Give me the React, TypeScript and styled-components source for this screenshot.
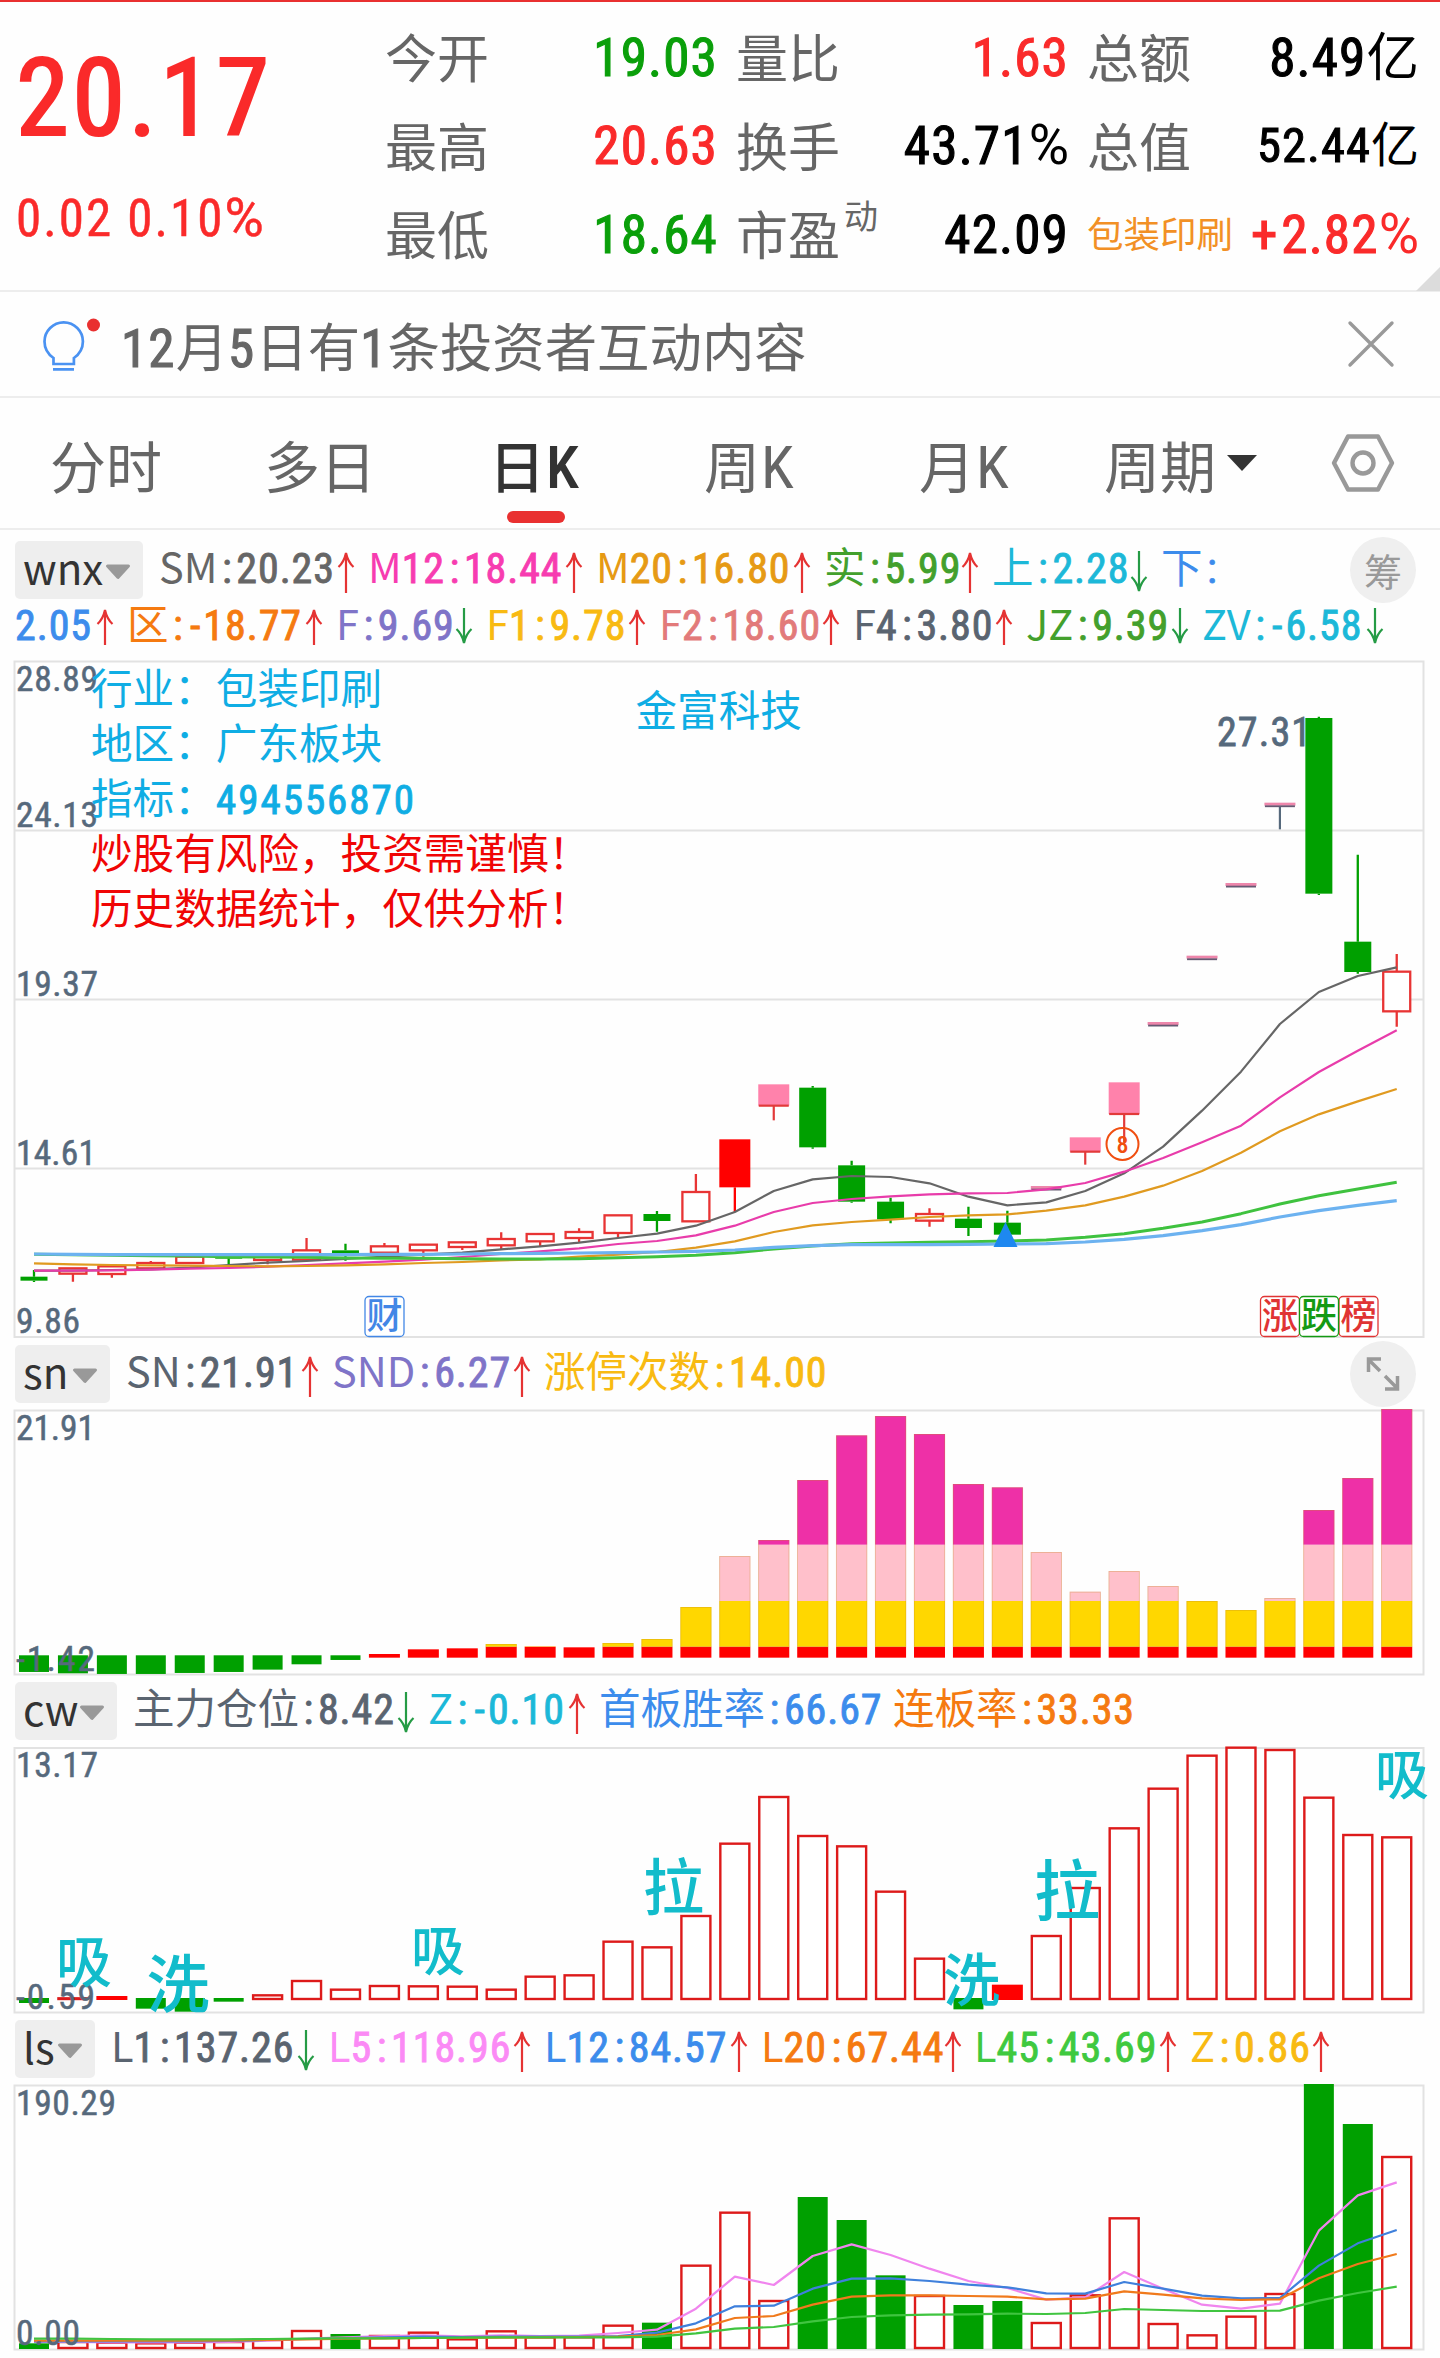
import React from "react";
import styled, { createGlobalStyle } from "styled-components";

const CJK = `"Noto Sans CJK SC", "Noto Sans", sans-serif`;
const DIGITS = `"Roboto Condensed", Roboto, "Noto Sans CJK SC", sans-serif`;

const RED = "#fa2a2a";
const GREEN = "#0a9f0a";
const AXIS = "#56697c";
const GRID = "#e2e2e2";

const GlobalStyle = createGlobalStyle`
  * { box-sizing: border-box; }
  body { margin: 0; background: #fff; }
`;

const Page = styled.main`
  width: 1440px;
  height: 2358px;
  overflow: hidden;
  display: flex;
  flex-direction: column;
  border-top: 2px solid #e93030;
  background: #fefefe;
  font-family: ${CJK};
  color: #666;
`;

/* ---------- mixed latin / CJK text with condensed numerals ---------- */

const Num = styled.span`
  font-family: ${DIGITS};
  font-weight: 400;
  font-size: 1.012em;
  letter-spacing: 0.022em;
  line-height: 1;
  -webkit-text-stroke: 0.021em currentColor;
`;

const Colon = styled(Num)`
  display: inline-block;
  width: 0.45em;
  letter-spacing: 0;
  text-align: center;
`;

const Sign = styled(Num)`
  display: inline-block;
  margin: 0 0.05em 0 0.06em;
`;

const Percent = styled.span`
  font-family: Roboto, sans-serif;
  font-size: 1.05em;
  font-weight: 400;
  line-height: 1;
`;

function Mixed({ children }: { children: string }) {
  return (
    <>
      {children.split(/([\d.]+|[:%+-])/).map((part, i) => {
        if (part === ":") return <Colon key={i}>:</Colon>;
        if (part === "%") return <Percent key={i}>%</Percent>;
        if (part === "-" || part === "+") return <Sign key={i}>{part}</Sign>;
        return i % 2 ? <Num key={i}>{part}</Num> : part;
      })}
    </>
  );
}

/* ---------- quote header ---------- */

const Quote = styled.header`
  position: relative;
  height: 290px;
  flex: none;
  display: grid;
  grid-template-columns: 367px 333px 333px 332px;
  column-gap: 18px;
  padding-right: 21px;
  border-bottom: 2px solid #ededed;
`;

const PriceBlock = styled.div`
  color: ${RED};
  padding: 34px 0 0 16px;
  white-space: nowrap;
`;

const Price = styled.div`
  font: 400 107px/126px ${DIGITS};
  letter-spacing: 3.4px;
  -webkit-text-stroke: 2.2px currentColor;
`;

const Change = styled.div`
  margin: 27px 0 0 0;
  font: 400 51px/60px ${DIGITS};
  letter-spacing: 2.1px;
  -webkit-text-stroke: 0.5px currentColor;
`;

const StatColumn = styled.div`
  padding-top: 10px;
`;

const Stat = styled.div`
  display: flex;
  justify-content: space-between;
  align-items: center;
  height: 88.5px;
  white-space: nowrap;
`;

const StatLabel = styled.span<{ $sector?: boolean }>`
  font-size: ${(p) => (p.$sector ? 36.5 : 52)}px;
  line-height: 80px;
  color: ${(p) => (p.$sector ? "#f29025" : "#666")};
`;

const Sup = styled.sup`
  font-size: 34px;
  line-height: 0;
  vertical-align: 26px;
  margin-left: 4px;
`;

const StatValue = styled.span<{ $color?: string; $small?: boolean }>`
  font-size: ${(p) => (p.$small ? 48 : 52.5)}px;
  line-height: 80px;
  padding-bottom: 7px;
  color: ${(p) => p.$color ?? "#000"};
`;

const Corner = styled.i`
  position: absolute;
  right: 0;
  bottom: -1px;
  border-bottom: 24px solid #dcdcdc;
  border-left: 24px solid transparent;
`;

/* ---------- notice ---------- */

const Notice = styled.section`
  height: 106px;
  flex: none;
  display: flex;
  align-items: center;
  padding: 0 45px 0 40px;
  border-bottom: 2px solid #ededed;
`;

const NoticeText = styled.p`
  flex: 1;
  margin: 0 0 0 19px;
  font-size: 52.4px;
  line-height: 80px;
`;

/* ---------- tabs ---------- */

const Tabs = styled.nav`
  height: 132px;
  flex: none;
  display: flex;
  border-bottom: 2px solid #ededed;
  padding-left: 50px;
`;

const Tab = styled.div<{ $w: number; $active?: boolean }>`
  position: relative;
  width: ${(p) => p.$w}px;
  font-size: 56px;
  line-height: 132px;
  white-space: nowrap;
  color: ${(p) => (p.$active ? "#333" : "#666")};
  font-weight: ${(p) => (p.$active ? 500 : 400)};
  ${(p) =>
    p.$active &&
    `&::after { content: ""; position: absolute; left: 18px; top: 113px; width: 58px; height: 12px; border-radius: 6px; background: #e93030; }`}
`;

const TabLetter = styled.span<{ $active?: boolean }>`
  font-family: ${DIGITS};
  font-weight: ${(p) => (p.$active ? 500 : 400)};
  font-size: 60px;
  line-height: 1;
  margin-left: 1px;
`;

const Caret = styled.i`
  display: inline-block;
  margin-left: 11px;
  vertical-align: 17px;
  border-top: 16px solid #333;
  border-left: 15px solid transparent;
  border-right: 15px solid transparent;
`;

const SettingsButton = styled.div`
  padding-top: 35px;
`;

/* ---------- indicator rows ---------- */

const IndicatorHead = styled.section<{ $h: number; $top: number }>`
  height: ${(p) => p.$h}px;
  flex: none;
  padding: ${(p) => p.$top}px 0 0 15px;
  display: flex;
  flex-direction: column;
`;

const IndicatorRow = styled.div<{ $h: number }>`
  display: flex;
  align-items: center;
  height: ${(p) => p.$h}px;
`;

const Chip = styled.div<{ $w: number }>`
  width: ${(p) => p.$w}px;
  height: 58px;
  flex: none;
  display: flex;
  align-items: center;
  justify-content: space-between;
  padding: 0 12px 0 8px;
  border-radius: 5px;
  background: #eee;
  color: #333;
  font-size: 42px;
  line-height: 56px;
  span {
    padding-bottom: 6px;
  }
  svg {
    margin-top: 3px;
  }
`;

const Reading = styled.div<{ $w: number; $color: string; $lift: number }>`
  width: ${(p) => p.$w}px;
  flex: none;
  display: flex;
  align-items: center;
  font-size: 41.5px;
  line-height: 56px;
  white-space: nowrap;
  color: ${(p) => p.$color};
  svg {
    flex: none;
    margin: 3px 13px 0 auto;
  }
  > span {
    padding-bottom: ${(p) => p.$lift}px;
  }
`;

const Spacer = styled.div<{ $w: number }>`
  width: ${(p) => p.$w}px;
  flex: none;
`;

const RoundButton = styled.div`
  width: 66px;
  height: 66px;
  margin: 0 24px 0 auto;
  flex: none;
  border-radius: 50%;
  display: flex;
  align-items: center;
  justify-content: center;
  background: #efefef;
  color: #999;
  font-size: 38px;
  line-height: 60px;
`;

const Plot = styled.svg`
  display: block;
  flex: none;
  overflow: visible;
`;

function ChipMark() {
  return (
    <svg width="26" height="16" viewBox="0 0 26 16">
      <path d="M2.5 2h21L13 13.5z" fill="#999" stroke="#999" strokeWidth="3" strokeLinejoin="round" />
    </svg>
  );
}

function Trend({ up, short }: { up: boolean; short?: boolean }) {
  const h = short ? 37 : 42;
  return (
    <svg width="18" height={h} viewBox={`0 0 18 ${h}`} fill="none" stroke={up ? "#e53333" : "#259b45"} strokeWidth="2.2">
      <path
        transform={up ? undefined : `translate(0 ${h}) scale(1 -1)`}
        d={`M9 2V${h}M1.5 16Q7 11 9 2Q11 11 16.5 16`}
      />
    </svg>
  );
}

type ReadingData = [text: string, width: number, color: string, trend?: "up" | "down"];

function Readings({ items, short }: { items: ReadingData[]; short?: boolean }) {
  return (
    <>
      {items.map(([text, w, color, trend]) => (
        <Reading key={text} $w={w} $color={color} $lift={short ? 6 : 10}>
          <span>
            <Mixed>{text}</Mixed>
          </span>
          {trend && <Trend up={trend === "up"} short={short} />}
        </Reading>
      ))}
    </>
  );
}

/* ---------- chart helpers ---------- */

const slot = (i: number) => 34 + 38.935 * i;

function Frame({ top, bottom, lines = [] }: { top: number; bottom: number; lines?: number[] }) {
  return (
    <g fill="none" stroke={GRID} strokeWidth="2">
      <rect x="14.5" y={top} width="1409" height={bottom - top} />
      {lines.map((y) => (
        <path key={y} d={`M14 ${y}H1423`} />
      ))}
    </g>
  );
}

function AxisLabel({ y, w, children }: { y: number; w: number; children: string }) {
  return (
    <text x="16" y={y} fill={AXIS} fontFamily={DIGITS} fontWeight="400" stroke={AXIS} strokeWidth="0.5" fontSize="35.5" textLength={w}>
      {children}
    </text>
  );
}

/** Polyline through one value per slot; the values are thirds of a pixel below `base`. */
function Line({ base, values, color, width = 2.2 }: { base: number; values: number[]; color: string; width?: number }) {
  return (
    <polyline
      points={values.map((v, i) => `${slot(i)},${base + v / 3}`).join(" ")}
      fill="none"
      stroke={color}
      strokeWidth={width}
      strokeLinejoin="round"
    />
  );
}

/* ---------- candlesticks ---------- */

type Candle = [kind: "up" | "down" | "solid" | "limit" | "flat", top: number, bottom: number, high: number, low: number];

const K_BASE = 940;
const candles: Candle[] = [
  ["down", 1010, 1022, 990, 1026],
  ["up", 985, 1001, 984, 1025],
  ["up", 979, 1002, 978, 1013],
  ["up", 969, 985, 963, 986],
  ["up", 950, 969, 948, 970],
  ["down", 948, 956, 948, 972],
  ["up", 950, 960, 940, 973],
  ["up", 931, 959, 894, 960],
  ["down", 931, 945, 911, 962],
  ["up", 919, 938, 909, 940],
  ["up", 914, 931, 913, 950],
  ["up", 907, 921, 905, 930],
  ["up", 897, 916, 877, 928],
  ["up", 882, 904, 880, 918],
  ["up", 876, 894, 865, 906],
  ["up", 826, 879, 825, 893],
  ["down", 822, 843, 813, 875],
  ["up", 756, 844, 702, 845],
  ["solid", 598, 742, 598, 816],
  ["limit", 433, 497, 433, 541],
  ["down", 443, 622, 438, 626],
  ["down", 676, 785, 662, 788],
  ["down", 785, 838, 773, 850],
  ["up", 822, 842, 805, 860],
  ["down", 836, 864, 800, 888],
  ["down", 848, 884, 812, 886],
  ["flat", 738, 751, 0, 0],
  ["limit", 592, 635, 592, 674],
  ["limit", 427, 522, 427, 606],
  ["flat", 246, 259, 0, 0],
  ["flat", 47, 60, 0, 0],
  ["flat", -171, -158, 0, 0],
  ["flat", -412, -399, 0, -332],
  ["down", -666, -139, -670, -135],
  ["down", 5, 96, -256, 101],
  ["up", 95, 214, 42, 260],
];

function CandleMark({ index, data: [kind, t, b, h, l] }: { index: number; data: Candle }) {
  const x = slot(index);
  const [top, bottom, high, low] = [t, b, h, l].map((v) => K_BASE + v / 3);
  if (kind === "flat") {
    return (
      <g>
        <rect x={x - 15.5} y={top} width="31" height="3" fill="#ee86ab" />
        <rect x={x - 15} y={top + 2.7} width="30" height="1.8" fill="#665a73" />
        {l !== 0 && <path d={`M${x} ${bottom}V${low}`} stroke={AXIS} strokeWidth="2.2" />}
      </g>
    );
  }
  if (kind === "limit") {
    return (
      <g stroke="#e23a3a" strokeWidth="2.2">
        <path d={`M${x} ${bottom}V${low}`} />
        <rect x={x - 15.5} y={top} width="31" height={bottom - top} fill="#ff82ab" stroke="none" />
        <path d={`M${x - 15} ${bottom}H${x + 15}`} />
      </g>
    );
  }
  const color = kind === "down" ? "#00a000" : kind === "solid" ? "#f00" : "#e83434";
  const half = kind === "solid" ? 15.5 : 13.5;
  return (
    <g stroke={color} strokeWidth="2.3">
      <path d={`M${x} ${high}V${top}M${x} ${bottom}V${low}`} />
      {kind === "up" ? (
        <rect x={x - half} y={top} width={half * 2} height={bottom - top} fill="#fff" />
      ) : (
        <rect x={x - half} y={top} width={half * 2} height={bottom - top} fill={color} stroke="none" />
      )}
    </g>
  );
}

const smLine = [992, 992, 990, 988, 983, 975, 968, 963, 957, 950, 944, 938, 928, 919, 908, 894, 881, 857, 816, 753, 718, 708, 711, 730, 770, 796, 787, 753, 700, 620, 512, 395, 252, 156, 108, 82];
const m12Line = [992, 992, 991, 989, 986, 984, 980, 975, 970, 965, 959, 951, 942, 934, 925, 912, 903, 886, 857, 816, 789, 777, 769, 763, 760, 759, 748, 729, 695, 654, 607, 557, 472, 396, 332, 271];
const m20Line = [970, 973, 975, 976, 977, 978, 979, 978, 976, 973, 969, 966, 961, 958, 950, 944, 936, 923, 904, 876, 856, 846, 839, 831, 826, 823, 812, 796, 770, 737, 693, 638, 574, 523, 484, 447];
const greenLine = [943, 944, 946, 947, 948, 950, 951, 952, 954, 955, 955, 956, 957, 957, 956, 953, 950, 946, 938, 927, 918, 911, 909, 907, 905, 903, 900, 892, 881, 865, 846, 821, 792, 767, 747, 727];
const blueLine = [942, 943, 944, 944, 944, 944, 944, 944, 944, 943, 943, 942, 941, 940, 939, 938, 936, 934, 930, 922, 917, 914, 914, 914, 913, 912, 911, 906, 898, 887, 872, 854, 831, 812, 796, 782];

function Badge({ x, color, children }: { x: number; color: string; children: string }) {
  return (
    <g>
      <rect x={x} y="1296.5" width="39" height="40" rx="4" fill="#fff" stroke={color} strokeWidth="1.3" />
      <text x={x + 19.5} y="1329" fontSize="36" fontFamily={CJK} fontWeight="500" fill={color} textAnchor="middle">
        {children}
      </text>
    </g>
  );
}

const notes: [string, string, number][] = [
  ["行业：包装印刷", "#0fade4", 704],
  ["地区：广东板块", "#0fade4", 759],
  ["指标：", "#0fade4", 814],
  ["炒股有风险，投资需谨慎！", "#f00505", 869],
  ["历史数据统计，仅供分析！", "#f00505", 924],
];

function KChart() {
  return (
    <Plot width="1440" height="678" viewBox="0 660 1440 678">
      <Frame top={661.5} bottom={1337} lines={[830.5, 999.5, 1168.5]} />
      {candles.map((c, i) => (
        <CandleMark key={i} index={i} data={c} />
      ))}
      <Line base={K_BASE} values={smLine} color="#666" />
      <Line base={K_BASE} values={m12Line} color="#e83caa" />
      <Line base={K_BASE} values={m20Line} color="#e09a20" />
      <Line base={K_BASE} values={greenLine} color="#3fc23f" width={3} />
      <Line base={K_BASE} values={blueLine} color="#6cb2f0" width={3.2} />
      <path d="M1005.5 1222L1017.5 1247H993.5z" fill="#1e88f0" />
      <circle cx="1122.5" cy="1144" r="16" fill="none" stroke="#f04e10" strokeWidth="2" />
      <text x="1122.5" y="1152.5" fontSize="24" fontFamily={DIGITS} fontWeight="500" fill="#f04e10" textAnchor="middle">8</text>
      <AxisLabel y={691} w={82}>28.89</AxisLabel>
      <AxisLabel y={827} w={82}>24.13</AxisLabel>
      <AxisLabel y={996} w={82}>19.37</AxisLabel>
      <AxisLabel y={1165} w={80}>14.61</AxisLabel>
      <AxisLabel y={1332.5} w={64}>9.86</AxisLabel>
      {notes.map(([text, color, y]) => (
        <text key={text} x="91" y={y} fontSize="41.6" fontFamily={CJK} fill={color}>{text}</text>
      ))}
      <text x="216" y="814" fontSize="41" fontFamily={DIGITS} fill="#0fade4" stroke="#0fade4" strokeWidth="0.9" textLength="198">494556870</text>
      <text x="635.5" y="726" fontSize="41.6" fontFamily={CJK} fill="#0fade4">金富科技</text>
      <text x="1217" y="745.5" fontSize="40" fontFamily={DIGITS} fill={AXIS} stroke={AXIS} strokeWidth="0.8" textLength="94">27.31</text>
      <Badge x={365} color="#4287e6">财</Badge>
      <Badge x={1260.5} color="#e03434">涨</Badge>
      <Badge x={1339} color="#e03434">榜</Badge>
      <Badge x={1299.5} color="#149a14">跌</Badge>
    </Plot>
  );
}

/* ---------- stacked momentum bars ---------- */

const snDown = [846, 850, 852, 852, 849, 846, 839, 823, 810];
const snUp = [792, 778, 775, 762, 769, 772, 759, 747, 651, 498, 450, 270, 136, 78, 132, 282, 292, 486, 605, 543, 588, 633, 660, 624, 360, 264, 57];
const snBands: [number, number, string][] = [
  [803, 770, "#f00"],
  [770, 633, "#ffd700"],
  [633, 464, "#ffc0cb"],
  [464, 0, "#ee30a7"],
];

function SnChart() {
  return (
    <Plot width="1440" height="265" viewBox="0 1410 1440 265">
      <Frame top={1410.5} bottom={1674.5} />
      {snDown.map((v, i) => (
        <rect key={i} x={slot(i) - 15} y="1655.3" width="30" height={(v - 796) / 3} fill="#00a000" />
      ))}
      {snUp.map((v, i) => (
        <g key={i}>
          {snBands.map(([from, to, fill]) =>
            v < from ? (
              <rect key={fill} x={slot(i + 9) - 15.5} y={1390 + Math.max(v, to) / 3} width="31" height={(from - Math.max(v, to)) / 3} fill={fill} />
            ) : null,
          )}
          {v < 770 && (
            <rect x={slot(i + 9) - 15.2} y={1390 + v / 3 + 0.5} width="30.4" height={(770 - v) / 3 - 0.5} fill="none" stroke="#c58a20" strokeOpacity="0.3" />
          )}
        </g>
      ))}
      <AxisLabel y={1440} w={79}>21.91</AxisLabel>
      <AxisLabel y={1671} w={79}>-1.42</AxisLabel>
    </Plot>
  );
}

/* ---------- position bars ---------- */

const cwBars: (["up" | "down" | "solid", number])[] = [
  ["down", 369], ["up", 355], ["solid", 348], ["down", 386], ["down", 395], ["down", 365], ["up", 346], ["up", 303], ["up", 329],
  ["up", 318], ["up", 319], ["up", 320], ["up", 329], ["up", 290], ["up", 286], ["up", 185], ["up", 202], ["up", 108],
  ["up", -109], ["up", -249], ["up", -132], ["up", -101], ["up", 35], ["up", 236], ["down", 388], ["solid", 314], ["up", 168], ["up", 24],
  ["up", -155], ["up", -274], ["up", -373], ["up", -397], ["up", -390], ["up", -247], ["up", -135], ["up", -128],
];

const cwWords: [string, number, number, number][] = [
  ["吸", 84, 1981.5, 56],
  ["洗", 178, 2006.5, 63],
  ["吸", 438, 1970.5, 54],
  ["拉", 673.5, 1909.5, 61],
  ["洗", 971.5, 2001, 57],
  ["拉", 1067, 1915, 66],
  ["吸", 1402, 1795, 54],
];

function HollowBar({ i, y, bottom }: { i: number; y: number; bottom: number }) {
  return <rect x={slot(i) - 14.5} y={y} width="29" height={bottom - y} fill="#fff" stroke="#dd1a1a" strokeWidth="2.4" />;
}

function CwChart() {
  return (
    <Plot width="1440" height="265" viewBox="0 1748 1440 265">
      <Frame top={1748} bottom={2012.5} />
      {cwBars.map(([kind, v], i) => {
        const y = 1880 + v / 3;
        if (kind === "up") return <HollowBar key={i} i={i} y={y} bottom={1999} />;
        if (kind === "solid") return <rect key={i} x={slot(i) - 15.5} y={y} width="31" height={2000 - y} fill="#f00" />;
        return <rect key={i} x={slot(i) - 15} y="1998" width="30" height={y - 1998} fill="#00a000" />;
      })}
      <AxisLabel y={1777} w={82}>13.17</AxisLabel>
      <AxisLabel y={2008.5} w={79}>-0.59</AxisLabel>
      {cwWords.map(([word, x, y, size], i) => (
        <text key={i} x={x} y={y} fontSize={size} fontFamily={CJK} fontWeight="500" fill="#12bccb" textAnchor="middle">{word}</text>
      ))}
    </Plot>
  );
}

/* ---------- volume bars ---------- */

const lsTops = [1390, 1386, 1388, 1390, 1388, 1386, 1380, 1353, 1362, 1368, 1358, 1378, 1354, 1372, 1372, 1337, 1328, 1157, 998, 1263, 951, 1020, 1186, 1248, 1275, 1263, 1329, 1246, 1015, 1332, 1366, 1310, 1242, 612, 732, 831];
const lsDown = new Set([0, 8, 16, 20, 21, 22, 24, 25, 33, 34]);
const l5 = [1386, 1386, 1387, 1387, 1387, 1386, 1382, 1376, 1372, 1368, 1366, 1369, 1366, 1368, 1367, 1359, 1349, 1286, 1190, 1215, 1128, 1093, 1125, 1166, 1203, 1224, 1259, 1252, 1176, 1226, 1274, 1286, 1271, 1052, 946, 907];
const l12 = [1384, 1384, 1384, 1384, 1384, 1383, 1380, 1377, 1374, 1372, 1370, 1371, 1370, 1370, 1370, 1368, 1358, 1330, 1279, 1277, 1226, 1196, 1195, 1203, 1214, 1222, 1240, 1241, 1206, 1226, 1247, 1255, 1254, 1157, 1090, 1050];
const l20 = [1382, 1382, 1382, 1382, 1382, 1381, 1380, 1378, 1376, 1375, 1374, 1374, 1373, 1372, 1371, 1370, 1365, 1348, 1314, 1308, 1274, 1250, 1246, 1246, 1248, 1250, 1258, 1256, 1234, 1244, 1255, 1260, 1258, 1195, 1152, 1122];
const l45 = [1376, 1376, 1377, 1378, 1378, 1378, 1377, 1376, 1375, 1375, 1374, 1373, 1372, 1372, 1372, 1372, 1370, 1360, 1346, 1341, 1324, 1311, 1306, 1304, 1303, 1301, 1302, 1299, 1287, 1290, 1293, 1293, 1292, 1262, 1239, 1220];

function LsChart() {
  return (
    <Plot width="1440" height="273" viewBox="0 2085 1440 273">
      <Frame top={2085.5} bottom={2349.5} />
      {lsTops.map((v, i) => {
        const y = 1880 + v / 3;
        return lsDown.has(i) ? (
          <rect key={i} x={slot(i) - 15} y={y} width="30" height={2349 - y} fill="#00a000" />
        ) : (
          <HollowBar key={i} i={i} y={y} bottom={2348} />
        );
      })}
      <Line base={1880} values={l5} color="#f085ee" />
      <Line base={1880} values={l12} color="#3f80dc" />
      <Line base={1880} values={l20} color="#f07a1c" />
      <Line base={1880} values={l45} color="#40c440" />
      <AxisLabel y={2115} w={100}>190.29</AxisLabel>
      <AxisLabel y={2345} w={64}>0.00</AxisLabel>
    </Plot>
  );
}

/* ---------- page ---------- */

export default function App() {
  return (
    <Page>
      <GlobalStyle />
      <Quote>
        <PriceBlock>
          <Price>20.17</Price>
          <Change>0.02 0.10<Percent>%</Percent></Change>
        </PriceBlock>
        <StatColumn>
          <Stat><StatLabel>今开</StatLabel><StatValue $color={GREEN}><Mixed>19.03</Mixed></StatValue></Stat>
          <Stat><StatLabel>最高</StatLabel><StatValue $color={RED}><Mixed>20.63</Mixed></StatValue></Stat>
          <Stat><StatLabel>最低</StatLabel><StatValue $color={GREEN}><Mixed>18.64</Mixed></StatValue></Stat>
        </StatColumn>
        <StatColumn>
          <Stat><StatLabel>量比</StatLabel><StatValue $color={RED}><Mixed>1.63</Mixed></StatValue></Stat>
          <Stat><StatLabel>换手</StatLabel><StatValue><Mixed>43.71%</Mixed></StatValue></Stat>
          <Stat><StatLabel>市盈<Sup>动</Sup></StatLabel><StatValue><Mixed>42.09</Mixed></StatValue></Stat>
        </StatColumn>
        <StatColumn>
          <Stat><StatLabel>总额</StatLabel><StatValue><Mixed>8.49亿</Mixed></StatValue></Stat>
          <Stat><StatLabel>总值</StatLabel><StatValue $small><Mixed>52.44亿</Mixed></StatValue></Stat>
          <Stat><StatLabel $sector>包装印刷</StatLabel><StatValue $color={RED}><Mixed>+2.82%</Mixed></StatValue></Stat>
        </StatColumn>
        <Corner />
      </Quote>

      <Notice>
        <svg width="62" height="56" viewBox="40 315 62 56" fill="none">
          <path d="M53.5 363V357C47 352.5 44.5 346.5 44.5 340.5A19.2 19.2 0 0 1 82.9 340.5C82.9 346.5 80.4 352.5 73.9 357V363ZM53 368.3H74" stroke="#4a92f2" strokeWidth="2.7" />
          <circle cx="93.5" cy="324" r="6.5" fill="#e93030" />
        </svg>
        <NoticeText><Mixed>12月5日有1条投资者互动内容</Mixed></NoticeText>
        <svg width="48" height="48" viewBox="0 0 48 48" stroke="#999" strokeWidth="3.4" strokeLinecap="round">
          <path d="M3 3L45 45M45 3L3 45" />
        </svg>
      </Notice>

      <Tabs>
        <Tab $w={214}>分时</Tab>
        <Tab $w={225}>多日</Tab>
        <Tab $w={215} $active>日<TabLetter $active>K</TabLetter></Tab>
        <Tab $w={215}>周<TabLetter>K</TabLetter></Tab>
        <Tab $w={185}>月<TabLetter>K</TabLetter></Tab>
        <Tab $w={227}>周期<Caret /></Tab>
        <SettingsButton>
          <svg width="64" height="60" viewBox="0 0 64 60" fill="none" stroke="#999" strokeWidth="4.4" strokeLinejoin="round">
            <path d="M17 3.5H47L61 30L47 56.5H17L3 30Z" />
            <circle cx="32" cy="30" r="10.5" />
          </svg>
        </SettingsButton>
      </Tabs>

      <IndicatorHead $h={130} $top={7}>
        <IndicatorRow $h={66}>
          <Chip $w={128}><span>wnx</span><ChipMark /></Chip>
          <Spacer $w={16} />
          <Readings
            items={[
              ["SM:20.23", 209, "#666", "up"],
              ["M12:18.44", 228, "#f73cb0", "up"],
              ["M20:16.80", 228, "#e69a14", "up"],
              ["实:5.99", 168, "#43a02c", "up"],
              ["上:2.28", 169, "#1cb8d8", "down"],
              ["下:", 60, "#3c8cec"],
            ]}
          />
          <RoundButton>筹</RoundButton>
        </IndicatorRow>
        <IndicatorRow $h={44}>
          <Readings
            short
            items={[
              ["2.05", 112, "#3c8cec", "up"],
              ["区:-18.77", 209, "#f57a10", "up"],
              ["F:9.69", 150, "#7f74c8", "down"],
              ["F1:9.78", 173, "#f8ba12", "up"],
              ["F2:18.60", 194, "#e27a7a", "up"],
              ["F4:3.80", 173, "#5a6470", "up"],
              ["JZ:9.39", 176, "#43a02c", "down"],
              ["ZV:-6.58", 195, "#1cb8d8", "down"],
            ]}
          />
        </IndicatorRow>
      </IndicatorHead>
      <KChart />

      <IndicatorHead $h={72} $top={3}>
        <IndicatorRow $h={66}>
          <Chip $w={95}><span>sn</span><ChipMark /></Chip>
          <Spacer $w={16} />
          <Readings
            items={[
              ["SN:21.91", 206, "#5a6470", "up"],
              ["SND:6.27", 212, "#7f74c8", "up"],
              ["涨停次数:14.00", 300, "#f8ba12"],
            ]}
          />
          <RoundButton>
            <svg width="34" height="34" viewBox="0 0 34 34" fill="none" stroke="#999" strokeWidth="3.5">
              <path d="M15 2H2.5V15M3 3L14 14M19 32H31.5V19M31 31L19 19" />
            </svg>
          </RoundButton>
        </IndicatorRow>
      </IndicatorHead>
      <SnChart />

      <IndicatorHead $h={73} $top={3}>
        <IndicatorRow $h={66}>
          <Chip $w={102}><span>cw</span><ChipMark /></Chip>
          <Spacer $w={16} />
          <Readings
            items={[
              ["主力仓位:8.42", 295, "#5a6470", "down"],
              ["Z:-0.10", 171, "#1cb8d8", "up"],
              ["首板胜率:66.67", 294, "#3c8cec"],
              ["连板率:33.33", 260, "#f57a10"],
            ]}
          />
        </IndicatorRow>
      </IndicatorHead>
      <CwChart />

      <IndicatorHead $h={72} $top={3}>
        <IndicatorRow $h={66}>
          <Chip $w={80}><span>ls</span><ChipMark /></Chip>
          <Spacer $w={16} />
          <Readings
            items={[
              ["L1:137.26", 217, "#5a6470", "down"],
              ["L5:118.96", 216, "#fb8af5", "up"],
              ["L12:84.57", 217, "#3c8cec", "up"],
              ["L20:67.44", 213, "#f57a10", "up"],
              ["L45:43.69", 216, "#3fc93f", "up"],
              ["Z:0.86", 153, "#f8ba12", "up"],
            ]}
          />
        </IndicatorRow>
      </IndicatorHead>
      <LsChart />
    </Page>
  );
}
